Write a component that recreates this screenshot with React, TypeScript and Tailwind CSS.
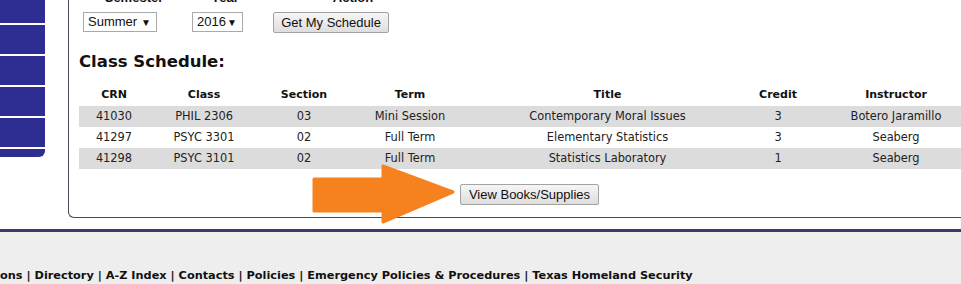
const courses = [
  { crn: "41030", cls: "PHIL 2306", section: "03", term: "Mini Session", title: "Contemporary Moral Issues", credit: "3", instructor: "Botero Jaramillo" },
  { crn: "41297", cls: "PSYC 3301", section: "02", term: "Full Term", title: "Elementary Statistics", credit: "3", instructor: "Seaberg" },
  { crn: "41298", cls: "PSYC 3101", section: "02", term: "Full Term", title: "Statistics Laboratory", credit: "1", instructor: "Seaberg" },
];

const columns = [
  { label: "CRN", width: "w-[70px]" },
  { label: "Class", width: "w-[110px]" },
  { label: "Section", width: "w-[90px]" },
  { label: "Term", width: "w-[122px]" },
  { label: "Title", width: "w-[273px]" },
  { label: "Credit", width: "w-[68px]" },
  { label: "Instructor", width: "w-[168px]" },
];

const footerLinks = [
  "ons",
  "Directory",
  "A-Z Index",
  "Contacts",
  "Policies",
  "Emergency Policies & Procedures",
  "Texas Homeland Security",
];

function Sidebar() {
  return (
    <div className="flex w-[45px] shrink-0 flex-col gap-[2px]">
      <div className="h-[23px] bg-[#2e2e92]" />
      <div className="h-[29px] bg-[#2e2e92]" />
      <div className="h-[29px] bg-[#2e2e92]" />
      <div className="h-[29px] bg-[#2e2e92]" />
      <div className="h-[29px] bg-[#2e2e92]" />
      <div className="h-[8px] rounded-br-[6px] bg-[#2e2e92]" />
    </div>
  );
}

function FakeSelect({ value, width }: { value: string; width: string }) {
  return (
    <div
      className={`${width} flex h-[20px] items-center justify-between border border-[#a9a9a9] bg-white pl-[4px] pr-[5px] text-[13px] text-[#111]`}
    >
      <span>{value}</span>
      <span className="text-[10px]">▼</span>
    </div>
  );
}

function GrayButton({ children, width }: { children: string; width: string }) {
  return (
    <button
      className={`${width} h-[21px] rounded-[2px] border border-[#a3a3a3] bg-gradient-to-b from-[#f6f6f6] to-[#dedede] text-[13px] leading-[19px] text-[#111]`}
    >
      {children}
    </button>
  );
}

export default function App() {
  return (
    <div className="relative h-[284px] w-[961px] overflow-hidden bg-white font-['DejaVu_Sans',sans-serif]">
      <div className="flex h-[218px]">
        <Sidebar />
        <div className="ml-[23px] flex flex-1 flex-col rounded-bl-[6px] border-b border-l border-[#47475a] pl-[10px]">
          {/* search form */}
          <div className="-mt-[10px] flex h-[15px] font-['Liberation_Sans',Arial,sans-serif] text-[13px] leading-[15px] font-bold text-[#111]">
            <span className="w-[110px] text-center">Semester</span>
            <span className="w-[72px] text-center">Year</span>
            <span className="w-[184px] text-center">Action</span>
          </div>
          <div className="mt-[5px] flex items-center font-['Liberation_Sans',Arial,sans-serif]">
            <div className="ml-[4px]">
              <FakeSelect value="Summer" width="w-[74px]" />
            </div>
            <div className="ml-[35px]">
              <FakeSelect value="2016" width="w-[51px]" />
            </div>
            <div className="ml-[30px]">
              <GrayButton width="w-[116px]">Get My Schedule</GrayButton>
            </div>
          </div>

          <h2 className="mt-[18px] text-[16.5px] leading-[20px] font-bold text-[#111]">
            Class Schedule:
          </h2>

          <table className="mt-[13px] w-[901px] table-fixed border-collapse text-[11.4px] text-[#222]">
            <colgroup>
              {columns.map((c) => (
                <col key={c.label} className={c.width} />
              ))}
            </colgroup>
            <thead>
              <tr className="h-[21px]">
                {columns.map((c) => (
                  <th key={c.label} className="p-0 text-center text-[11px] font-bold text-[#111]">
                    {c.label}
                  </th>
                ))}
              </tr>
            </thead>
            <tbody>
              {courses.map((c, i) => (
                <tr key={c.crn} className={i % 2 === 0 ? "h-[21px] bg-[#dcdcdc]" : "h-[21px] bg-white"}>
                  <td className="p-0 text-center">{c.crn}</td>
                  <td className="p-0 text-center">{c.cls}</td>
                  <td className="p-0 text-center">{c.section}</td>
                  <td className="p-0 text-center">{c.term}</td>
                  <td className="p-0 text-center">{c.title}</td>
                  <td className="p-0 text-center">{c.credit}</td>
                  <td className="p-0 text-center">{c.instructor}</td>
                </tr>
              ))}
            </tbody>
          </table>

          <div className="mt-[15px] flex w-[901px] justify-center font-['Liberation_Sans',Arial,sans-serif]">
            <GrayButton width="w-[139px]">View Books/Supplies</GrayButton>
          </div>
        </div>
      </div>

      <footer className="mt-[11px] h-[55px] border-t-[3px] border-[#3a3a6c] bg-[#eeeeee] pt-[37px]">
        <p className="text-[11.3px] leading-[13px] font-bold whitespace-nowrap text-[#111]">
          {footerLinks.join(" | ")}
        </p>
      </footer>

      {/* orange arrow pointing at the books button */}
      <svg
        className="pointer-events-none absolute top-0 left-0"
        width="961"
        height="284"
        viewBox="0 0 961 284"
      >
        <polygon
          points="314,179 383,179 383,166 453,192 383,222 383,211 314,211"
          fill="#f6821f"
          stroke="#f6821f"
          strokeWidth="3"
          strokeLinejoin="round"
        />
      </svg>
    </div>
  );
}
